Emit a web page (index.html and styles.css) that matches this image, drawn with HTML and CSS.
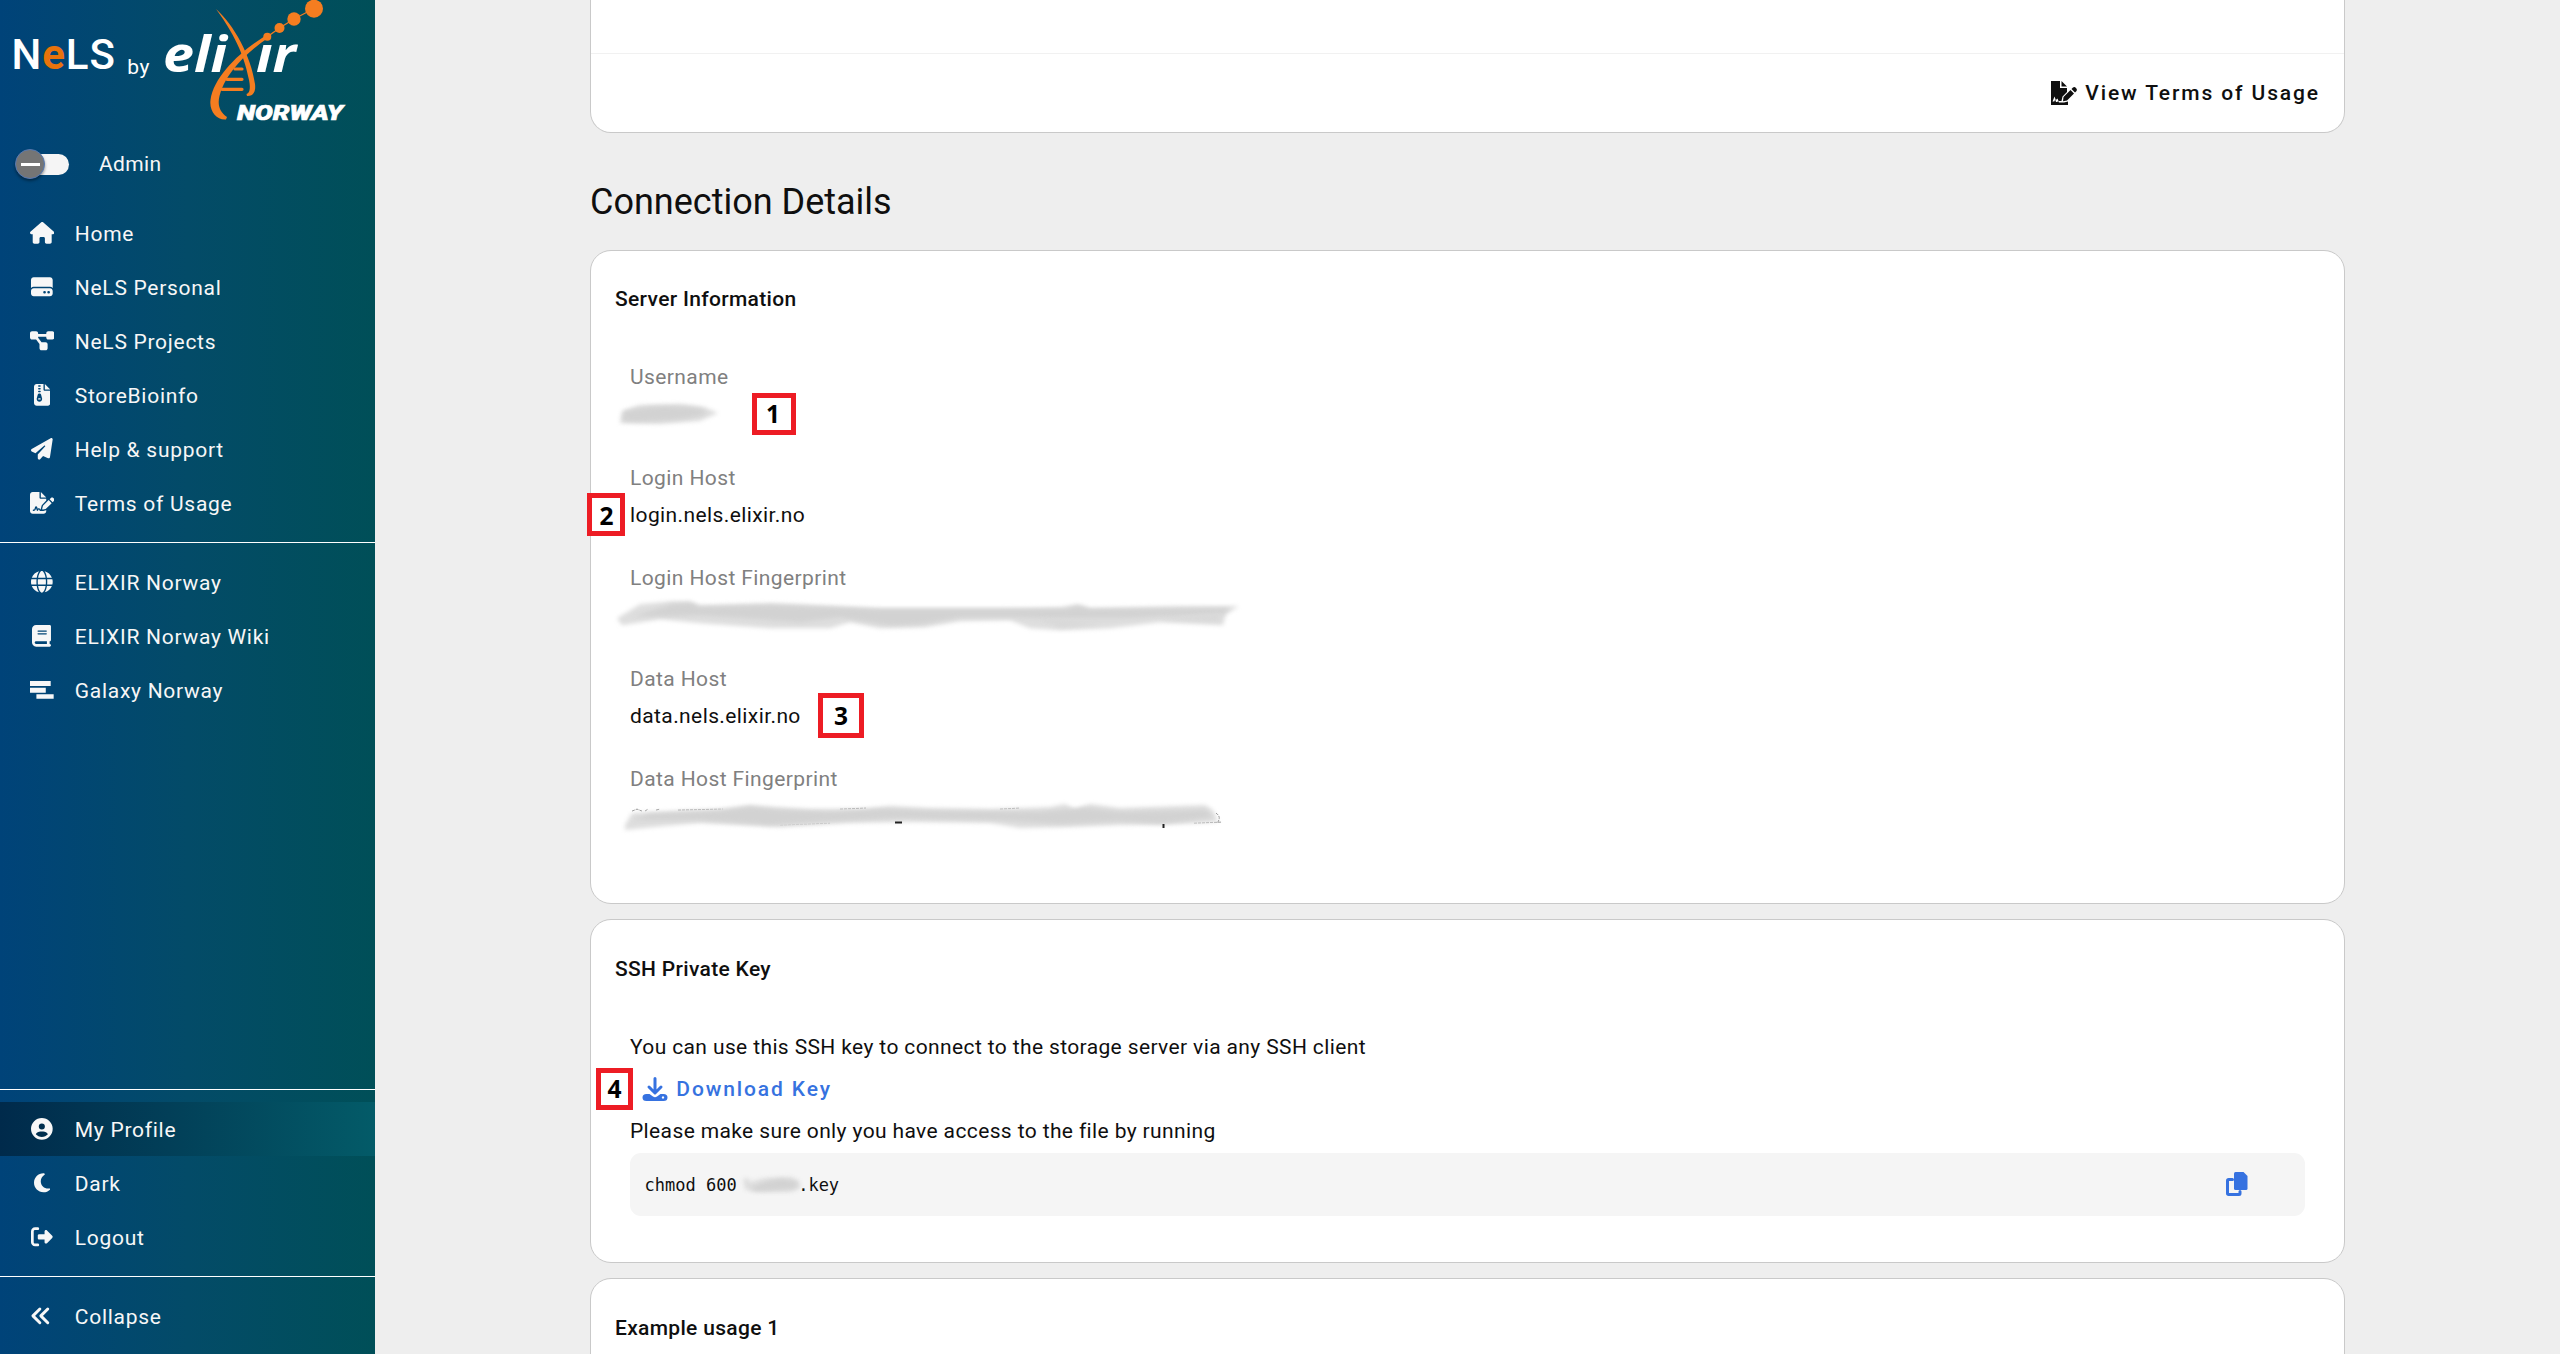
FILE: index.html
```html
<!DOCTYPE html>
<html lang="en">
<head>
<meta charset="utf-8">
<title>NeLS - My Profile</title>
<link rel="stylesheet" href="styles.css">
</head>
<body>
<div class="app">
  <aside class="sidebar">
    <svg class="logo" viewBox="0 0 375 130">
      <text class="logo-nels" x="11.500" y="69.300">N<tspan class="logo-e">e</tspan>LS</text>
      <text class="logo-by" x="127.300" y="73.500">by</text>
      <g class="logo-elixir">
        <text x="163" y="71.600" textLength="64" lengthAdjust="spacingAndGlyphs">eli</text>
        <text x="256" y="71.600" textLength="40" lengthAdjust="spacingAndGlyphs">ır</text>
      </g>
      <text class="logo-norway" x="237" y="119.600" textLength="106" lengthAdjust="spacingAndGlyphs">NORWAY</text>
      <g class="logo-helix">
        <path d="M216 9C234 25 251 56 255 84C256 92 253 96.500 247 96L246.500 94C251 92.500 250 85 249 80C245 60 238 39 216 9z"/>
        <path d="M265 36C240 52 214 76 210.500 100C209 111 217 120.500 226 119.500L227 117C219 112 217.500 104 219.500 96C224 76 244 54 268 38z"/>
        <path class="helix-line" d="M235 69h7M227 79.300h15M222 89.300h20"/>
        <path class="helix-link" d="M267 37L279.500 28L294 19L314 8.500"/>
        <circle cx="267.300" cy="36.800" r="4"/><circle cx="279.500" cy="28" r="5"/><circle cx="294" cy="19" r="6.700"/><circle cx="314" cy="8.700" r="9"/>
      </g>
    </svg>
    <div class="admin">
      <span class="toggle"><span class="thumb"></span></span>
      <span>Admin</span>
    </div>
    <nav class="menu">
      <a class="item"><svg viewBox="0 0 576 512"><path d="M575.8 255.5c0 18-15 32.100-32 32.100l-32 0 .7 160.200c0 2.700-.2 5.400-.5 8.100l0 16.200c0 22.100-17.900 40-40 40l-16 0c-1.100 0-2.200 0-3.300-.1c-1.400 .1-2.800 .1-4.200 .1L416 512l-24 0c-22.100 0-40-17.900-40-40l0-24 0-64c0-17.700-14.300-32-32-32l-64 0c-17.700 0-32 14.300-32 32l0 64 0 24c0 22.100-17.900 40-40 40l-24 0-31.900 0c-1.500 0-3-.1-4.500-.2c-1.200 .1-2.400 .2-3.600 .2l-16 0c-22.100 0-40-17.900-40-40l0-112c0-.9 0-1.900 .1-2.800l0-69.700-32 0c-18 0-32-14-32-32.100c0-9 3-17 10-24L266.400 8c7-7 15-8 22-8s15 2 21 7L564.800 231.500c8 7 12 15 11 24z"/></svg><span>Home</span></a>
      <a class="item"><svg viewBox="0 0 512 512"><path d="M0 96C0 60.700 28.700 32 64 32l384 0c35.300 0 64 28.700 64 64l0 184.400c-17-15.200-39.400-24.400-64-24.400L64 256c-24.600 0-47 9.200-64 24.400L0 96zM64 288l384 0c35.300 0 64 28.700 64 64l0 64c0 35.300-28.700 64-64 64L64 480c-35.300 0-64-28.700-64-64l0-64c0-35.300 28.700-64 64-64zM320 416a32 32 0 1 0 0-64 32 32 0 1 0 0 64zm128-32a32 32 0 1 0 -64 0 32 32 0 1 0 64 0z"/></svg><span>NeLS Personal</span></a>
      <a class="item"><svg viewBox="0 0 576 512"><path d="M0 80C0 53.500 21.500 32 48 32l96 0c26.500 0 48 21.500 48 48l0 16 192 0 0-16c0-26.500 21.500-48 48-48l96 0c26.500 0 48 21.500 48 48l0 96c0 26.500-21.500 48-48 48l-96 0c-26.500 0-48-21.500-48-48l0-16-192 0 0 16c0 1.700-.1 3.400-.3 5L272 288l96 0c26.500 0 48 21.500 48 48l0 96c0 26.500-21.500 48-48 48l-96 0c-26.500 0-48-21.500-48-48l0-96c0-1.700 .1-3.400 .3-5L144 224l-96 0c-26.500 0-48-21.500-48-48L0 80z"/></svg><span>NeLS Projects</span></a>
      <a class="item"><svg viewBox="0 0 384 512"><path d="M64 0C28.700 0 0 28.700 0 64L0 448c0 35.300 28.700 64 64 64l256 0c35.300 0 64-28.700 64-64l0-288-128 0c-17.700 0-32-14.300-32-32L224 0 64 0zM256 0l0 128 128 0L256 0zM96 48c0-8.800 7.200-16 16-16l32 0c8.800 0 16 7.200 16 16s-7.200 16-16 16l-32 0c-8.800 0-16-7.200-16-16zm0 64c0-8.800 7.200-16 16-16l32 0c8.800 0 16 7.200 16 16s-7.200 16-16 16l-32 0c-8.800 0-16-7.200-16-16zm0 64c0-8.800 7.200-16 16-16l32 0c8.800 0 16 7.200 16 16s-7.200 16-16 16l-32 0c-8.800 0-16-7.200-16-16zm-6.300 71.800c3.700-14 16.400-23.800 30.900-23.800l14.800 0c14.500 0 27.200 9.700 30.900 23.800l23.500 88.200c1.400 5.400 2.100 10.900 2.100 16.400c0 35.200-28.800 63.700-64 63.700s-64-28.500-64-63.700c0-5.500 .7-11.100 2.100-16.400l23.500-88.200zM112 336c-8.800 0-16 7.200-16 16s7.200 16 16 16l32 0c8.800 0 16-7.200 16-16s-7.200-16-16-16l-32 0z"/></svg><span>StoreBioinfo</span></a>
      <a class="item"><svg viewBox="0 0 512 512"><path d="M498.100 5.600c10.100 7 15.400 19.100 13.500 31.200l-64 416c-1.500 9.700-7.400 18.200-16 23s-18.900 5.400-28 1.600L284 427.700l-68.500 74.100c-8.900 9.700-22.900 12.900-35.200 8.100S160 493.200 160 480l0-83.600c0-4 1.500-7.800 4.200-10.800L331.800 202.800c5.800-6.300 5.600-16-.4-22s-15.700-6.400-22-.7L106 360.800 17.700 316.600C7.100 311.300 .3 300.700 0 288.900s5.900-22.800 16.100-28.700l448-256c10.700-6.100 23.900-5.500 34 1.400z"/></svg><span>Help &amp; support</span></a>
      <a class="item"><svg viewBox="0 0 576 512"><path d="M64 0C28.700 0 0 28.700 0 64L0 448c0 35.300 28.700 64 64 64l256 0c35.300 0 64-28.700 64-64l0-19.300c-2.700 1.100-5.400 2-8.200 2.700l-60.100 15c-3 .7-6 1.200-9 1.400c-.9 .1-1.800 .2-2.700 .2l-64 0c-6.100 0-11.600-3.400-14.300-8.800l-8.800-17.700c-1.700-3.400-5.100-5.500-8.800-5.500s-7.200 2.100-8.800 5.500l-8.800 17.700c-2.900 5.900-9.200 9.400-15.700 8.800s-12.100-5.100-13.900-11.300L144 381l-9.800 32.800c-6.100 20.300-24.800 34.200-46 34.200L80 448c-8.800 0-16-7.200-16-16s7.200-16 16-16l8.200 0c7.100 0 13.300-4.600 15.300-11.400l14.900-49.500c3.400-11.300 13.800-19.100 25.600-19.100s22.200 7.700 25.600 19.100l11.600 38.600c7.400-6.200 16.800-9.700 26.800-9.700c15.900 0 30.400 9 37.500 23.200l4.400 8.800 8.900 0c-3.100-8.800-3.700-18.400-1.400-27.800l15-60.100c2.800-11.300 8.600-21.500 16.800-29.700L384 203.600l0-43.600-128 0c-17.700 0-32-14.300-32-32L224 0 64 0zM256 0l0 128 128 0L256 0zM549.800 139.700c-15.600-15.600-40.900-15.600-56.600 0l-29.400 29.400 71 71 29.400-29.400c15.600-15.600 15.600-40.900 0-56.600l-14.400-14.400zM311.900 321c-4.100 4.100-7 9.200-8.400 14.900l-15 60.100c-1.400 5.500 .2 11.200 4.200 15.200s9.700 5.600 15.200 4.200l60.100-15c5.600-1.400 10.800-4.300 14.900-8.400L512.100 262.700l-71-71L311.900 321z"/></svg><span>Terms of Usage</span></a>
    </nav>
    <nav class="menu ruled">
      <a class="item"><svg viewBox="0 0 512 512"><path d="M352 256c0 22.200-1.200 43.600-3.300 64l-185.300 0c-2.200-20.400-3.300-41.800-3.300-64s1.200-43.600 3.300-64l185.300 0c2.200 20.400 3.300 41.800 3.300 64zm28.800-64l123.100 0c5.300 20.500 8.100 41.900 8.100 64s-2.800 43.500-8.100 64l-123.100 0c2.100-20.600 3.200-42 3.200-64s-1.100-43.400-3.200-64zm112.600-32l-116.700 0c-10-63.900-29.800-117.400-55.300-151.600c78.300 20.700 142 77.500 171.900 151.600zm-149.100 0l-176.600 0c6.100-36.400 15.500-68.600 27-94.700c10.500-23.600 22.200-40.700 33.500-51.500C239.400 3.200 248.700 0 256 0s16.600 3.200 27.800 13.800c11.300 10.800 23 27.900 33.500 51.500c11.600 26 20.900 58.200 27 94.700zm-209 0L18.600 160C48.600 85.900 112.200 29.100 190.600 8.400C165.100 42.600 145.300 96.100 135.300 160zM8.100 192l123.100 0c-2.100 20.600-3.200 42-3.200 64s1.100 43.400 3.200 64L8.100 320C2.800 299.500 0 278.100 0 256s2.800-43.500 8.100-64zM194.700 446.600c-11.600-26-20.900-58.200-27-94.600l176.600 0c-6.100 36.400-15.500 68.600-27 94.600c-10.500 23.600-22.200 40.700-33.500 51.500C272.600 508.800 263.300 512 256 512s-16.600-3.200-27.800-13.800c-11.300-10.800-23-27.900-33.500-51.500zM135.300 352c10 63.900 29.800 117.400 55.300 151.600C112.200 482.900 48.600 426.100 18.600 352l116.700 0zm358.100 0c-30 74.100-93.600 130.900-171.900 151.600c25.500-34.200 45.200-87.700 55.300-151.600l116.700 0z"/></svg><span>ELIXIR Norway</span></a>
      <a class="item"><svg viewBox="0 0 448 512"><path d="M96 0C43 0 0 43 0 96L0 416c0 53 43 96 96 96l288 0 32 0c17.700 0 32-14.300 32-32s-14.300-32-32-32l0-64c17.700 0 32-14.300 32-32l0-320c0-17.700-14.300-32-32-32L384 0 96 0zm0 384l256 0 0 64L96 448c-17.700 0-32-14.300-32-32s14.300-32 32-32zm32-240c0-8.800 7.200-16 16-16l192 0c8.800 0 16 7.200 16 16s-7.200 16-16 16l-192 0c-8.800 0-16-7.200-16-16zm16 48l192 0c8.800 0 16 7.200 16 16s-7.200 16-16 16l-192 0c-8.800 0-16-7.200-16-16s7.200-16 16-16z"/></svg><span>ELIXIR Norway Wiki</span></a>
      <a class="item"><svg viewBox="0 0 24 22"><path d="M0 2h21v5H0zM0 9h16v5H0zM6.500 15.500H24v4.500H6.500z"/></svg><span>Galaxy Norway</span></a>
    </nav>
    <nav class="menu ruled bottom">
      <a class="item active"><svg viewBox="0 0 512 512"><path d="M399 384.200C376.900 345.800 335.400 320 288 320l-64 0c-47.400 0-88.900 25.800-111 64.200c35.200 39.200 86.200 63.800 143 63.800s107.800-24.700 143-63.800zM0 256a256 256 0 1 1 512 0A256 256 0 1 1 0 256zm256 16a72 72 0 1 0 0-144 72 72 0 1 0 0 144z"/></svg><span>My Profile</span></a>
      <a class="item"><svg viewBox="0 0 384 512"><path d="M223.500 32C100 32 0 132.300 0 256S100 480 223.500 480c60.600 0 115.500-24.200 155.800-63.400c5-4.900 6.300-12.500 3.100-18.700s-10.100-9.700-17-8.500c-9.800 1.700-19.800 2.600-30.100 2.600c-96.900 0-175.500-78.800-175.500-176c0-65.800 36-123.100 89.300-153.300c6.100-3.500 9.200-10.500 7.700-17.300s-7.300-11.900-14.300-12.500c-6.300-.5-12.600-.8-19-.8z"/></svg><span>Dark</span></a>
      <a class="item"><svg viewBox="0 0 512 512"><path d="M377.900 105.900L500.700 228.700c7.200 7.200 11.300 17.100 11.300 27.300s-4.100 20.100-11.300 27.300L377.900 406.100c-6.400 6.400-15 9.900-24 9.900c-18.700 0-33.900-15.200-33.900-33.900l0-62.100-128 0c-17.700 0-32-14.300-32-32l0-64c0-17.700 14.300-32 32-32l128 0 0-62.100c0-18.700 15.200-33.900 33.900-33.900c9 0 17.600 3.600 24 9.900zM160 96L96 96c-17.700 0-32 14.300-32 32l0 256c0 17.700 14.300 32 32 32l64 0c17.700 0 32 14.300 32 32s-14.300 32-32 32l-64 0c-53 0-96-43-96-96L0 128C0 75 43 32 96 32l64 0c17.700 0 32 14.300 32 32s-14.300 32-32 32z"/></svg><span>Logout</span></a>
    </nav>
    <nav class="menu ruled">
      <a class="item"><svg class="line-icon" viewBox="0 0 24 22"><path d="M10 4L3 11l7 7M18 4l-7 7l7 7"/></svg><span>Collapse</span></a>
    </nav>
  </aside>

  <main class="content">
    <section class="card card-terms">
      <div class="card-footer">
        <a class="button"><svg viewBox="0 0 26 24"><path d="M0 0H9V7H16V11L11.500 15.500L10.500 20H7.500L6.500 17.500L4.800 19L3.500 15.500L1.500 20.500H3.300L4.200 18.500L5 21H6.200L7.200 20L8 21.500H13L17 20.500V24H0zM10.500 0L16 5.500H10.500zM12.500 16L19.500 9L23 12.500L16 19.500L12 20.300zM20.500 8L22 6.500Q23.500 5.500 25 7T25.500 10L24 11.500z"/></svg>View Terms of Usage</a>
      </div>
    </section>

    <h1 class="heading">Connection Details</h1>

    <section class="card card-server">
      <h2 class="card-title">Server Information</h2>
      <dl class="fields">
        <div class="field"><dt>Username</dt>
          <dd><svg class="smudge" viewBox="0 0 640 37"><g transform="translate(-610 -396)"><path class="soft" d="M622 411L640 405L680 404L704 407L718 413L700 421L660 424L620 423z"/><path class="core" d="M624 412C645 406 665 406 684 407S702 410 706 412S690 419 670 420S640 422 623 421z"/></g></svg></dd></div>
        <div class="field"><dt>Login Host</dt><dd>login.nels.elixir.no</dd></div>
        <div class="field"><dt>Login Host Fingerprint</dt>
          <dd><svg class="smudge" viewBox="0 0 640 37"><g transform="translate(-610 -596.700)"><path class="soft" d="M617 618L640 604L672 601L690 601L700 605L770 603L800 604L880 608L1000 608L1060 607L1078 604L1090 608L1180 606L1239 606L1226 614L1223 625L1160 622L1110 628L1060 630L1030 628L1010 620L960 621L925 627L880 628L850 622L830 628L770 628L700 623L660 619L622 625z"/><path class="core" d="M634 616L672 604L690 603L700 607L770 605L795 606L880 609L1000 609L1065 609L1078 606L1090 609L1230 608L1224 613L1120 618L1050 618L1015 617L960 617L920 624L890 625L840 617L800 622L760 619L700 615L660 616z"/><path class="core faint" d="M1040 618L1100 624L1060 627zM1160 619L1220 614L1219 621z"/></g></svg></dd></div>
        <div class="field"><dt>Data Host</dt><dd>data.nels.elixir.no</dd></div>
        <div class="field"><dt>Data Host Fingerprint</dt>
          <dd><svg class="smudge" viewBox="0 0 640 37"><g transform="translate(-610 -797.900)"><path class="residue" d="M632 811l5-2l5 2M645 811l3-2M656 810l4-1M678 810l45-1M840 809l26-1M1000 809l20-1M780 825l50-2M1194 823l28-1"/><path class="soft" d="M625 825L632 813L720 809L750 805L775 807L810 809L860 809L890 806L930 808L990 809L1050 807L1065 804L1075 809L1090 804L1120 808L1205 805L1213 810L1218 822L1180 824L1120 825L1070 827L1020 828L990 823L910 822L850 823L780 827L700 823L665 826L625 830z"/><path class="core" d="M632 820L650 814L720 811L750 807L780 810L830 812L885 809L930 811L1040 812L1085 808L1120 812L1205 810L1213 817L1160 824L1120 821L1060 824L1000 820L900 818L830 821L770 825L700 820z"/><path class="mark" d="M895 822.500h7M1163.500 824v4"/><path class="residue" d="M1216 813q6 4 1 10"/></g></svg></dd></div>
      </dl>
    </section>

    <section class="card card-key">
      <h2 class="card-title">SSH Private Key</h2>
      <div class="card-body">
        <p class="line">You can use this SSH key to connect to the storage server via any SSH client</p>
        <p class="line"><a class="button primary"><svg viewBox="0 0 25 24"><path d="M4 17H7L10.500 19.500Q12.500 21 14.500 19.500L18 17H21Q25 17 25 20.500T21 24H4Q0 24 0 20.500T4 17zM20.500 19.300a1.200 1.200 0 1 0 .01 0z"/><path class="stroke" d="M12.500 1.500V15M6.500 10L12.500 16L18.500 10"/></svg>Download Key</a></p>
        <p class="line">Please make sure only you have access to the file by running</p>
        <div class="code">
          <code>chmod 600 <svg class="blurred" viewBox="0 0 51.300 20"><path class="soft" d="M-4 4L2 3L3 15L-2 15zM2 7L18 3L44 2L52 6L54 13L44 17L14 17L2 15z"/><path class="core" d="M2 14L18 7L34 4L50 7L48 13L26 15L8 16z"/></svg>.key</code>
          <svg class="copy" viewBox="0 0 22 24"><path d="M8 1.500Q8 0 9.500 0H17.500L21.500 4V16.500Q21.500 18 20 18H9.500Q8 18 8 16.500z"/><path class="stroke" d="M6.500 7.500H2.700Q1.500 7.500 1.500 8.700V21.300Q1.500 22.500 2.700 22.500H13Q14 22.500 14 21.500V19.500"/></svg>
        </div>
      </div>
    </section>

    <section class="card card-example">
      <h2 class="card-title">Example usage 1</h2>
    </section>
  </main>

  <span class="badge badge-1">1</span>
  <span class="badge badge-2">2</span>
  <span class="badge badge-3">3</span>
  <span class="badge badge-4">4</span>
</div>
</body>
</html>
```
FILE: styles.css
```css
* { box-sizing: border-box; margin: 0; padding: 0; }
body { font: 400 21px/42px Roboto, sans-serif; letter-spacing: 0.375px; color: #0f0f0f; background: #eee; }
.app { position: relative; display: flex; height: 1354px; overflow: hidden; }

/* Sidebar */
.sidebar { display: flex; flex-direction: column; flex: none; width: 375px; padding-bottom: 11px; color: #f7f7f7; background: linear-gradient(90deg, #004379, #034b68 50%, #004f58); }
.logo { display: block; flex: none; width: 375px; height: 130px; fill: #fff; }
.logo-nels { font-size: 42px; font-weight: 500; letter-spacing: 0.9px; }
.logo-e { fill: #e8730c; font-weight: 700; }
.logo-by { font-size: 21px; letter-spacing: 0.4px; }
.logo-elixir { font: italic 700 50px "Open Sans", sans-serif; letter-spacing: 0; }
.logo-norway { font: italic 900 19.5px Roboto, sans-serif; letter-spacing: 0; stroke: #fff; stroke-width: 0.6px; }
.logo-helix { fill: #f47d20; stroke: none; }
.helix-line, .helix-link { fill: none; stroke: #f47d20; stroke-width: 3.2px; stroke-linecap: round; }
.helix-link { stroke-width: 1.3px; }
.admin { display: flex; align-items: center; flex: none; gap: 30px; height: 68px; margin-bottom: 8px; padding-left: 15px; }
.toggle { width: 54px; height: 21px; border-radius: 11px; background: linear-gradient(90deg, transparent 15px, #f5f5f5 15px); }
.thumb { display: flex; align-items: center; justify-content: center; width: 30px; height: 30px; margin-top: -4.500px; border: 1px solid #5479b4; border-radius: 50%; background: #757575; box-shadow: 0 2px 3px rgba(0, 0, 0, 0.4); }
.thumb::before { content: ""; width: 19px; height: 3px; background: #fff; }
.menu { display: flex; flex-direction: column; flex: none; letter-spacing: 0.72px; }
.ruled { margin-top: 12px; padding-top: 12px; border-top: 1px solid #fff; }
.bottom { margin-top: auto; }
.item { display: grid; grid-template-columns: 24.500px auto; align-items: center; column-gap: 20.800px; height: 54px; padding-left: 29.500px; }
.item span { padding-top: 1.500px; }
.ruled .item span { padding-top: 1px; }
.item svg { justify-self: center; height: 21.700px; fill: currentColor; }
.item .line-icon { fill: none; stroke: currentColor; stroke-width: 3px; stroke-linecap: round; stroke-linejoin: round; }
.active { background: linear-gradient(90deg, #002a4b, #023f58 45%, #035b68); }

/* Cards */
.content { display: flex; flex-direction: column; flex: none; width: 1755px; margin-left: 215px; }
.card { flex: none; border: 1px solid #c9c9c9; border-radius: 21px; background: #fff; }
.card-terms { display: flex; flex-direction: column; justify-content: flex-end; height: 133px; border-top: 0; border-radius: 0 0 21px 21px; }
.card-footer { display: flex; align-items: center; justify-content: flex-end; height: 79px; padding-right: 24px; border-top: 1px solid #f1f1f1; }
.button { display: inline-flex; align-items: center; gap: 8px; font-weight: 500; letter-spacing: 1.89px; }
.button svg { width: 26px; height: 24px; fill: currentColor; }
.heading { height: 117px; padding: 48px 0 27px; font-size: 36px; font-weight: 400; line-height: 42px; letter-spacing: 0; }
.card-title { height: 50px; padding-left: 24px; font-size: 21px; font-weight: 500; line-height: 50px; letter-spacing: 0.32px; }
.card-server { height: 654px; margin-bottom: 15px; padding-top: 23px; }
.fields { padding: 35px 39px 0 39px; line-height: 37px; letter-spacing: 0.4px; }
.field { height: 100.600px; }
.field dt { height: 37px; color: #808080; }
.field dd { height: 37px; }
.smudge { display: block; width: 640px; height: 37px; margin-left: -20px; }
.soft { fill: #dedede; filter: blur(2px); }
.core { fill: #d2d2d2; filter: blur(2px); }
.faint { fill: #d8d8d8; }
.residue { fill: none; stroke: #999; stroke-width: 1px; stroke-dasharray: 3 1; }
.mark { fill: none; stroke: #222; stroke-width: 2px; }
.card-key { height: 344px; margin-bottom: 15px; padding-top: 24px; }
.card-body { padding: 32px 39px 0 39px; }
.line { height: 42px; }
.primary { height: 42px; padding-left: 12.300px; color: #3672e0; vertical-align: top; }
.stroke { fill: none; stroke: currentColor; stroke-width: 3px; stroke-linecap: round; stroke-linejoin: round; }
.code { display: flex; align-items: center; justify-content: space-between; height: 63px; margin-top: 1px; padding: 0 57px 0 14.500px; border-radius: 11px; background: #f5f5f5; }
.code code { display: flex; align-items: center; font: 17px "DejaVu Sans Mono", monospace; letter-spacing: 0; white-space: pre; }
.blurred { width: 51.300px; height: 20px; overflow: visible; }
.copy { width: 22px; height: 24px; margin-bottom: 2px; fill: #3672e0; color: #3672e0; }
.card-example { height: 344px; padding-top: 24px; }

/* Numbered callouts laid over the page */
.badge { position: absolute; display: flex; align-items: center; justify-content: center; padding-bottom: 1px; border: 5px solid #ed1c24; background: #fff; color: #000; font: 700 24.500px "Noto Sans", sans-serif; letter-spacing: 0; }
.badge-1 { left: 752px; top: 393px; width: 44px; height: 42px; padding-right: 2px; }
.badge-2 { left: 587px; top: 493px; width: 38px; height: 43px; padding: 1px 0 0 1px; }
.badge-3 { left: 818px; top: 693px; width: 46px; height: 45px; }
.badge-4 { left: 596px; top: 1068px; width: 37px; height: 42px; }
```
